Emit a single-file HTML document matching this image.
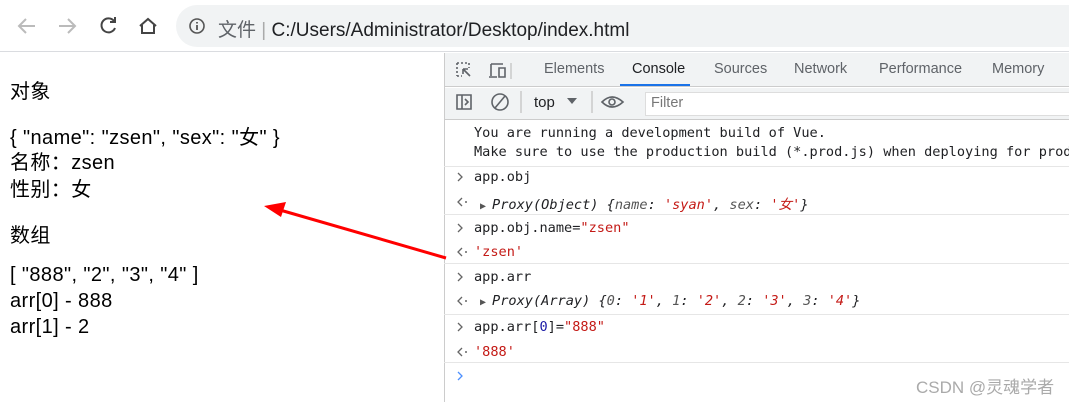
<!DOCTYPE html><html><head><meta charset="utf-8"><style>
*{margin:0;padding:0;box-sizing:border-box}
html,body{overflow:hidden}
body{width:1069px;height:402px;background:#fff;position:relative;font-family:"Liberation Sans","Noto Sans CJK SC",sans-serif}
.a{position:absolute;white-space:nowrap}
.l{font-size:20px;color:#000;left:10px;letter-spacing:0.4px}
.m{font-family:"DejaVu Sans Mono","Liberation Mono",monospace;font-size:13.6px;color:#202124;left:474px}
.sep{position:absolute;left:444px;right:0;height:1px;background:#e6e6e6}
.r{color:#c41a16}.i{font-style:italic}
.tab{position:absolute;top:61px;font-size:14.5px;color:#5f6368}
</style></head><body>
<div class="a" style="left:0;top:0;width:1069px;height:52px;background:#fff;border-bottom:1px solid #dadce0"></div>
<svg class="a" style="left:0;top:0" width="180" height="52"><g fill="none" stroke-width="2"><path d="M35 26H19M26 19l-7 7 7 7" stroke="#bbb"/><path d="M59 26h16M68 19l7 7-7 7" stroke="#bbb"/><path d="M114 21a7 7 0 1 0 1 7M115 17v5h-5" stroke="#444"/><path d="M140 26l8-7 8 7M142 25v8h12v-8" stroke="#444"/></g></svg>
<div class="a" style="left:176px;top:5px;width:893px;height:42px;border-radius:21px 0 0 21px;background:#f1f3f4"></div>
<svg class="a" style="left:188px;top:17px" width="18" height="18"><circle cx="9" cy="9" r="7" fill="none" stroke="#555" stroke-width="1.6"/><path d="M9 8v5M9 5v1.5" stroke="#555" stroke-width="1.8"/></svg>
<div class="a" style="left:218px;top:15px;font-size:19px;color:#5f6368">文件 <span style="color:#aaa">|</span> <span style="color:#202124">C:/Users/Administrator/Desktop/index.html</span></div>

<div class="a l" style="top:75px">对象</div>
<div class="a l" style="top:121px">{ "name": "zsen", "sex": "女" }</div>
<div class="a l" style="top:146px">名称：zsen</div>
<div class="a l" style="top:173px">性别：女</div>
<div class="a l" style="top:219px">数组</div>
<div class="a l" style="top:264px">[ "888", "2", "3", "4" ]</div>
<div class="a l" style="top:290px">arr[0] - 888</div>
<div class="a l" style="top:316px">arr[1] - 2</div>

<div class="a" style="left:444px;top:53px;width:625px;height:349px;border-left:1px solid #ccc;background:#fff"></div>
<div class="a" style="left:445px;top:53px;width:624px;height:34px;background:#f1f3f4;border-bottom:1px solid #ccc"></div>
<div class="a" style="left:445px;top:88px;width:624px;height:32px;background:#f1f3f4;border-bottom:1px solid #ccc"></div>
<svg class="a" style="left:445px;top:53px" width="200" height="67"><g fill="none" stroke="#5f6368" stroke-width="1.6"><path d="M12 10h12M12 10v13M12 23h5M24 10v5" stroke-dasharray="2 2"/><path d="M18 16l7 7M18 16v5M18 16h5"/><path d="M46 11h12M46 11v12M44 24h8M54 15h6v9h-6z"/><path d="M66 10v16" stroke="#ccc"/><path d="M12 42h14v14H12zM17 42v14M20 46l3 3-3 3"/><circle cx="55" cy="49" r="8"/><path d="M50 55l10-12"/><path d="M76 38v22M147 38v22" stroke="#ccc"/><path d="M157 49q10-10 21 0q-11 10-21 0z"/><circle cx="167" cy="49" r="3"/></g><path d="M122 45h10l-5 6z" fill="#5f6368"/></svg>
<div class="a" style="left:534px;top:94px;font-size:15px;color:#202124">top</div>
<div class="a" style="left:645px;top:92px;width:424px;height:24px;background:#fff;border:1px solid #ddd;border-right:none"></div>
<div class="a" style="left:651px;top:95px;font-size:14.5px;color:#777">Filter</div>
<div class="tab" style="left:544px">Elements</div>
<div class="tab" style="left:632px;color:#202124">Console</div>
<div class="a" style="left:620px;top:84px;width:70px;height:2px;background:#1a73e8"></div>
<div class="tab" style="left:714px">Sources</div>
<div class="tab" style="left:794px">Network</div>
<div class="tab" style="left:879px">Performance</div>
<div class="tab" style="left:992px">Memory</div>

<svg class="a" style="left:445px;top:160px" width="30" height="230"><g fill="none" stroke="#666" stroke-width="1.3"><path d="M13 13l4 4-4 4M13 64l4 4-4 4M13 113l4 4-4 4M13 163l4 4-4 4"/><path d="M17 38l-4 4 4 4M17 88l-4 4 4 4M17 137l-4 4 4 4M17 188l-4 4 4 4"/><path d="M13 212l4 4-4 4" stroke="#4d90fe"/></g><g fill="#666"><circle cx="21" cy="42" r="1"/><circle cx="21" cy="92" r="1"/><circle cx="21" cy="141" r="1"/><circle cx="21" cy="192" r="1"/></g></svg>

<div class="a m" style="top:125px">You are running a development build of Vue.</div>
<div class="a m" style="top:144px;width:595px;overflow:hidden">Make sure to use the production build (*.prod.js) when deploying for production.</div>
<div class="sep" style="top:166px"></div>
<div class="a m" style="top:169px">app.obj</div>
<div class="a m" style="top:193px;left:480px"><span style="font-size:10px;color:#555">▶ </span><span class="i">Proxy(Object) {<span style="color:#555">name</span>: <span class="r">'syan'</span>, <span style="color:#555">sex</span>: <span class="r">'女'</span>}</span></div>
<div class="sep" style="top:214px"></div>
<div class="a m" style="top:220px">app.obj.name=<span class="r">"zsen"</span></div>
<div class="a m r" style="top:244px">'zsen'</div>
<div class="sep" style="top:263px"></div>
<div class="a m" style="top:269px">app.arr</div>
<div class="a m" style="top:293px;left:480px"><span style="font-size:10px;color:#555">▶ </span><span class="i">Proxy(Array) {<span style="color:#555">0</span>: <span class="r">'1'</span>, <span style="color:#555">1</span>: <span class="r">'2'</span>, <span style="color:#555">2</span>: <span class="r">'3'</span>, <span style="color:#555">3</span>: <span class="r">'4'</span>}</span></div>
<div class="sep" style="top:314px"></div>
<div class="a m" style="top:319px">app.arr[<span style="color:#1a1aa6">0</span>]=<span class="r">"888"</span></div>
<div class="a m r" style="top:344px">'888'</div>
<div class="sep" style="top:362px"></div>
<div class="a" style="left:916px;top:373px;font-size:17px;color:#aaa">CSDN @灵魂学者</div>

<svg class="a" style="left:0;top:0" width="1069" height="402"><path d="M446 258L280 210" stroke="#f00" stroke-width="3"/><path d="M264 206l22-4-5 15z" fill="#f00"/></svg>
</body></html>
